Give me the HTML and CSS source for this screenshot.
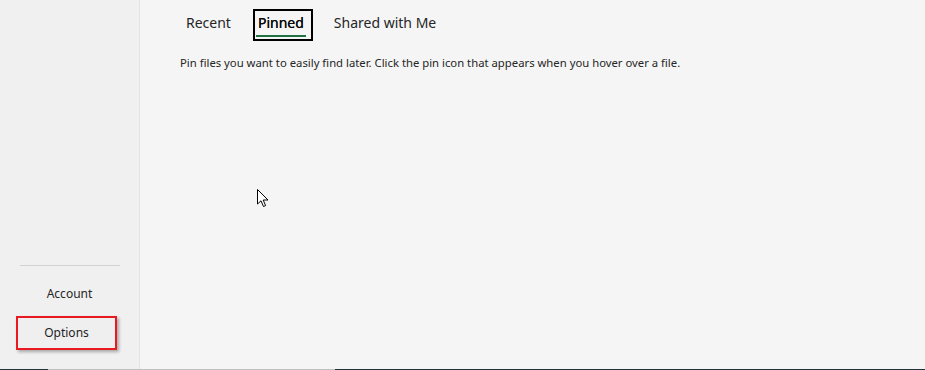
FILE: index.html
```html
<!DOCTYPE html>
<html lang="en">
<head>
<meta charset="utf-8">
<link rel="stylesheet" href="styles.css">
</head>
<body>
<div class="app">
  <aside class="sidebar">
    <div class="spacer"></div>
    <div class="sep"></div>
    <div class="nav-item account">Account</div>
    <div class="nav-item options">Options</div>
  </aside>
  <main class="main">
    <nav class="tabs">
      <div class="tab recent">Recent</div>
      <div class="tab active"><span class="tab-label">Pinned</span></div>
      <div class="tab">Shared with Me</div>
    </nav>
    <p class="desc">Pin files you want to easily find later. Click the pin icon that appears when you hover over a file.</p>
    <svg class="cursor" width="12" height="20" viewBox="0 0 12 20">
      <path d="M0.5 0.5 L0.5 15 L4 11.8 L6.5 17.5 L8.6 16.6 L6.2 11 L11 11 Z" fill="#fff" stroke="#000" stroke-width="1" stroke-linejoin="miter"/>
    </svg>
  </main>
</div>
<div class="taskbar">
  <div class="seg dark1"></div>
  <div class="seg light"></div>
  <div class="seg dark2"></div>
</div>
</body>
</html>
```
FILE: styles.css
```css
html, body {
  margin: 0;
  padding: 0;
  width: 925px;
  height: 370px;
  overflow: hidden;
  font-family: "Noto Sans", "Open Sans", sans-serif;
  color: #262626;
}
.app {
  display: flex;
  height: 369px;
}
.sidebar {
  width: 139px;
  background: #f0f0f0;
  border-right: 1px solid #e3e3e3;
  display: flex;
  flex-direction: column;
  align-items: stretch;
}
.spacer { flex: 1; }
.sep {
  height: 1px;
  background: #d2d2d2;
  margin: 0 19px 0 20px;
}
.nav-item {
  font-size: 12px;
  text-align: center;
  color: #262626;
}
.account {
  margin-top: 20px;
  height: 16px;
  line-height: 16px;
}
.options {
  margin: 14px 22px 19px 16px;
  height: 30px;
  line-height: 30px;
  border: 2px solid #e8191f;
  box-shadow: 2px 2px 3px rgba(0,0,0,0.3);
  background: #efefef;
  color: #1e1e1e;
}
.main {
  flex: 1;
  background: #f5f5f5;
  position: relative;
}
.tabs {
  display: flex;
  align-items: flex-start;
  margin-top: 9px;
  padding-left: 44px;
}
.tab {
  font-size: 14px;
  color: #262626;
  border: 2px solid transparent;
  padding: 2px 0 0 0;
  line-height: 20px;
  height: 26px;
}
.tab.recent { margin-right: 20px; }
.tab.active {
  border-color: #000;
  padding: 0 5px 0 1px;
  height: 28px;
  margin-right: 19px;
  color: #0a0a0a;
  text-shadow: 0 0 0.4px #000;
}
.tab-label {
  display: inline-block;
  padding: 2px 2px 2px 2px;
  line-height: 20px;
  border-bottom: 2px solid #217346;
}
.desc {
  margin: 14px 0 0 40px;
  font-size: 11.3px;
  color: #262626;
}
.cursor {
  position: absolute;
  left: 117px;
  top: 189px;
}
.taskbar {
  display: flex;
  height: 1px;
}
.seg.dark1 { width: 48px; background: #25323a; }
.seg.light { width: 287px; background: #c0c0c0; }
.seg.dark2 { flex: 1; background: #25323a; }
```
